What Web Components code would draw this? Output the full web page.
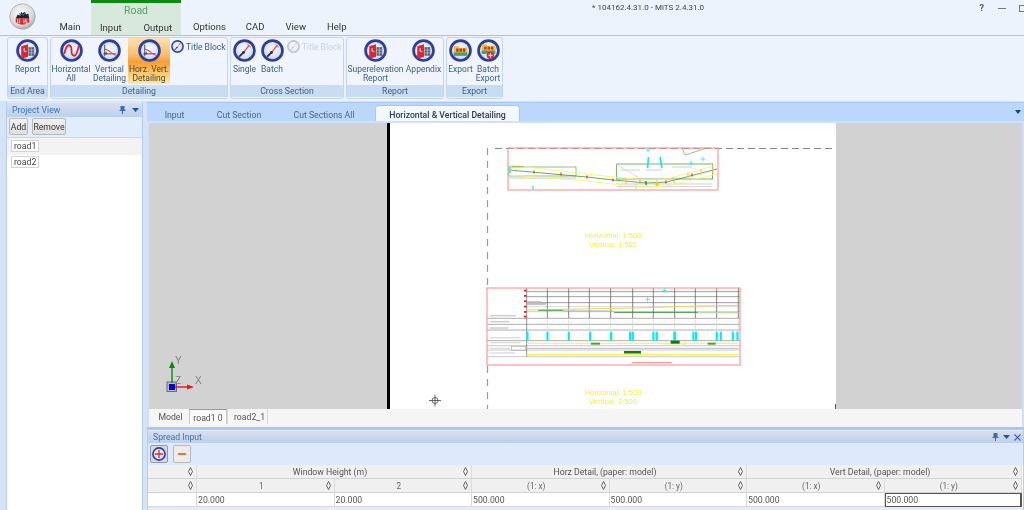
<!DOCTYPE html>
<html lang="en">
<head>
<meta charset="utf-8">
<title>MiTS</title>
<style>
html,body{margin:0;padding:0;background:#edf3fc;overflow:hidden}
body{width:1024px;height:510px;font:8.500px Roboto,"Liberation Sans",sans-serif;color:#4a5563}
</style>
</head>
<body>
<x-app>
  <x-titlebar>
    <x-orb slot="orb"></x-orb>
  </x-titlebar>
  <x-ribbon>
    <x-group w="41" label="End Area">
      <x-rbtn w="39" kind="report">Report</x-rbtn>
    </x-group>
    <x-group w="178" label="Detailing">
      <x-rbtn w="40" kind="curve">Horizontal<br>All</x-rbtn>
      <x-rbtn w="37" kind="detail">Vertical<br>Detailing</x-rbtn>
      <x-rbtn w="42" kind="detail" active>Horz. Vert.<br>Detailing</x-rbtn>
      <x-sbtn>Title Block</x-sbtn>
    </x-group>
    <x-group w="114" label="Cross Section">
      <x-rbtn w="27" kind="section">Single</x-rbtn>
      <x-rbtn w="28" kind="section">Batch</x-rbtn>
      <x-sbtn disabled>Title Block</x-sbtn>
    </x-group>
    <x-group w="98" label="Report">
      <x-rbtn w="57" kind="report">Superelevation<br>Report</x-rbtn>
      <x-rbtn w="39" kind="report">Appendix</x-rbtn>
    </x-group>
    <x-group w="57" label="Export">
      <x-rbtn w="27" kind="export">Export</x-rbtn>
      <x-rbtn w="28" kind="batch">Batch<br>Export</x-rbtn>
    </x-group>
  </x-ribbon>
  <x-workspace>
    <x-panel slot="left" heading="Project View" hh="14">
      <x-project-view></x-project-view>
    </x-panel>
    <x-doc slot="doc"></x-doc>
    <x-panel slot="bottom" heading="Spread Input" hh="12" closable>
      <x-spread></x-spread>
    </x-panel>
  </x-workspace>
</x-app>

<script>
const def=(n,c)=>customElements.define(n,c);
class Base extends HTMLElement{
  constructor(){super();this.attachShadow({mode:'open'});}
  html(s){this.shadowRoot.innerHTML=s;}
}
/* ---------- root ---------- */
def('x-app',class extends Base{connectedCallback(){this.html(`<style>
:host{display:flex;flex-direction:column;width:1024px;height:510px;overflow:hidden;background:#edf3fc;filter:blur(.3px)}
</style><slot></slot>`);}});

/* ---------- title bar ---------- */
def('x-orb',class extends Base{connectedCallback(){this.html(`<style>:host{display:block;width:27px;height:27px}svg{display:block}</style>
<svg width="27" height="27" viewBox="0 0 28 28"><defs>
<radialGradient id="o" cx=".42" cy=".35" r=".75"><stop offset="0" stop-color="#fafafa"/><stop offset=".65" stop-color="#d8d8d8"/><stop offset="1" stop-color="#8f959c"/></radialGradient></defs>
<circle cx="14" cy="14" r="13.200" fill="url(#o)" stroke="#a2a8ae" stroke-width=".8"/>
<path d="M7 16l2-4 2 1 2-4 1 2 2-2 2 3 2-1 1 5z" fill="#17252f"/>
<path d="M11 10.500l1 2.500 2-2 1 2 1.500-3" stroke="#1d7fa0" fill="none"/>
<path d="M7 16h14v4q-3 2.500-7 2.500t-7-2.500z" fill="#e2232b"/>
<path d="M9 17v4M11 17v4M15.500 17v4M18.500 17.500h-1.500v1.500h1.500v2h-1.500" stroke="#fff" stroke-width=".9" fill="none"/>
</svg>`);}});
def('x-titlebar',class extends Base{connectedCallback(){this.html(`<style>
:host{display:flex;height:35px;flex:none;border-bottom:1px solid #b8c0cb;background:#edf3fc;color:#333;font-size:9.500px}
.orb{width:49px;padding:3px 0 0 9px;box-sizing:border-box}
.tab{display:flex;align-items:flex-end;justify-content:center;padding-bottom:2px;box-sizing:border-box;line-height:12px}
.main{width:42px}
.road{width:90px;background:#d9e8dd;border-top:3px solid #0d8a12;display:flex;flex-direction:column;box-sizing:border-box}
.road b{font-weight:400;color:#4da760;font-size:10.500px;text-align:center;line-height:14px;height:15px;padding-top:1px}
.road div{display:flex;justify-content:space-between;padding:3px 9px 0 9px;line-height:12px}
.rest{flex:1;display:flex;flex-direction:column}
.top{height:16px;display:flex;padding-left:411px;font-size:8px;line-height:15px;color:#444}
.w{margin-left:auto;display:flex;gap:14px;align-items:center}
.w span{font-weight:700;font-size:9px;color:#555}
.m{width:8px;height:1px;background:#777}
.r{width:6px;height:5px;border:1px solid #777;border-right:0;margin-left:-1px;margin-right:-2px}
.tabs{display:flex;height:19px;align-items:flex-end;padding-bottom:2px;box-sizing:border-box;line-height:12px}
</style>
<div class="orb"><slot name="orb"></slot></div>
<div class="tab main">Main</div>
<div class="road"><b>Road</b><div><span>Input</span><span>Output</span></div></div>
<div class="rest">
  <div class="top"><span>* 104162.4.31.0 - MiTS 2.4.31.0</span>
    <div class="w"><span>?</span><i class="m"></i><i class="r"></i></div></div>
  <div class="tabs"><span style="margin-left:12px">Options</span><span style="margin-left:20px">CAD</span><span style="margin-left:21px">View</span><span style="margin-left:21px">Help</span></div>
</div>`);}});

/* ---------- icons ---------- */
const glyph={
 report:`<path d="M5.500 7.500l7-2v13l-7 2z" fill="#e2232b"/><path d="M8.500 9.500v3.500h2.300" stroke="#fff" stroke-width=".9" fill="none"/><path d="M13 8.500h6v9h-6z" fill="#5b6270"/><path d="M13 11.500h6M13 14.500h6M16 8.500v9" stroke="#cfd6e2" stroke-width=".6"/>`,
 curve:`<path d="M4.500 15.500q2-9 4.800-9t2.700 5.500 2.700 5.500 4.800-10" fill="none" stroke="#d9252f" stroke-width="1.900"/>`,
 detail:`<path d="M7 6v12M5.500 15.500h13" stroke="#3a3f4a" stroke-width=".9"/><path d="M7 10.500l4 1.500 3 2.500 4.500 2.500" fill="none" stroke="#e0454c" stroke-width="1.100"/><path d="M8.500 13l1.200 3h-2.700z" fill="#3a3f4a"/>`,
 section:`<path d="M6.500 18.500l4.500-4.500" stroke="#262b36" stroke-width="1.800"/><path d="M11 14l6-7.500" stroke="#e45a50" stroke-width="1.500"/><circle cx="11" cy="14" r="1.400" fill="#262b36"/><path d="M15 5.500l3.500 3" stroke="#e45a50"/>`,
 export:`<path d="M5 7.500h5l1 1.500h8v8.500h-14z" fill="#e7c23a"/><path d="M5 14h14v3.500h-14z" fill="#4f9e67"/><path d="M7.500 10h2.500v3.200h-2.500zM11 10h2.500v3.200h-2.500zM14.500 10h2.500v3.200h-2.500z" fill="#d62b2b"/>`,
 batch:`<path d="M5 5.500h5l1 1.500h8v8.500h-14z" fill="#e7c23a"/><path d="M5 12h14v3.500h-14z" fill="#4f9e67"/><path d="M7.500 8h2.500v3h-2.500zM11 8h2.500v3h-2.500zM14.500 8h2.500v3h-2.500z" fill="#d62b2b"/><circle cx="14" cy="17" r="3.800" fill="#e0262e"/><path d="M11.800 17h4.400M14 14.800v4.400" stroke="#fff" stroke-width="1.200"/>`,
 plus:`<path d="M5 12h14M12 5v14" stroke="#e0262e" stroke-width="2.200"/>`
};
def('x-icon',class extends Base{connectedCallback(){
 const k=this.getAttribute('kind'),s=this.getAttribute('size')||24;
 this.html(`<style>:host{display:block;width:${s}px;height:${s}px}svg{display:block}</style>
<svg width="${s}" height="${s}" viewBox="0 0 24 24"><defs>
<radialGradient id="g" cx=".5" cy=".4" r=".65"><stop offset="0" stop-color="#f6f8fd"/><stop offset=".7" stop-color="#d6dff2"/><stop offset="1" stop-color="#a5b3d8"/></radialGradient></defs>
<circle cx="12" cy="12" r="10.400" fill="url(#g)" stroke="#2f3f98" stroke-width="2.800"/>${glyph[k]||''}</svg>`);}});

/* ---------- ribbon ---------- */
def('x-ribbon',class extends Base{connectedCallback(){this.html(`<style>
:host{display:flex;gap:2px;height:65px;flex:none;padding:1px 0 0 7px;box-sizing:border-box;background:#edf3fc}
</style><slot></slot>`);}});
def('x-group',class extends Base{connectedCallback(){this.html(`<style>
:host{display:flex;flex-direction:column;width:${this.getAttribute('w')}px;height:62px;box-sizing:border-box;border:1px solid #c3d6ee;border-radius:3px;background:#f0f5fd;flex:none}
.c{display:flex;height:47px}
.l{height:12px;background:#c8ddf3;text-align:center;font-size:8.700px;line-height:12px;color:#3f5f82}
</style><div class="c"><slot></slot></div><div class="l">${this.getAttribute('label')}</div>`);}});
def('x-rbtn',class extends Base{connectedCallback(){
 const a=this.hasAttribute('active');
 this.html(`<style>
:host{display:flex;flex-direction:column;align-items:center;flex:none;width:${this.getAttribute('w')}px;box-sizing:border-box;height:46px;padding-top:1px;
 font-size:8.500px;line-height:9.200px;text-align:center;color:#41607f;white-space:nowrap;
 ${a?'background:linear-gradient(#fde0ae 0,#fbbf70 36%,#f79e34 52%,#fcc767 75%,#ffe9a8 100%);color:#4d4330;border-radius:1px;':''}}
div{margin-top:2.500px}
</style><x-icon kind="${this.getAttribute('kind')}" size="23"></x-icon><div><slot></slot></div>`);}});
def('x-sbtn',class extends Base{connectedCallback(){
 const d=this.hasAttribute('disabled');
 this.html(`<style>
:host{display:flex;align-items:center;gap:2px;height:13px;margin:2px 0 0 1px;font-size:8.500px;white-space:nowrap;color:${d?'#c9d2de':'#41607f'}}
x-icon{${d?'opacity:.28;filter:grayscale(1)':''}}
</style><x-icon kind="section" size="13"></x-icon><span><slot></slot></span>`);}});

/* ---------- workspace ---------- */
def('x-workspace',class extends Base{connectedCallback(){this.html(`<style>
:host{flex:1;min-height:0;display:grid;grid-template-columns:137px 1fr;grid-template-rows:325px 1fr;column-gap:4px;padding:1px 0 0 6px;box-sizing:border-box;background:#d4e3f8}
.l{grid-row:1/3;min-height:0}
.d{min-height:0}.b{min-height:0;padding-top:3px;box-sizing:border-box;background:#a9c9f1}
</style><div class="l"><slot name="left"></slot></div><div class="d"><slot name="doc"></slot></div><div class="b"><slot name="bottom"></slot></div>`);}});
def('x-panel',class extends Base{connectedCallback(){
 const pin=`<svg width="7" height="8" viewBox="0 0 7 8"><path d="M1.500 0h4v4h1v1h-2.500v3h-1v-3h-2.500v-1h1z" fill="#3c6bb4"/></svg>`;
 const tri=`<svg width="7" height="4" viewBox="0 0 7 4"><path d="M0 0h7l-3.500 4z" fill="#25549a"/></svg>`;
 const x=`<svg width="7" height="7" viewBox="0 0 7 7"><path d="M.5.500l6 6M6.500.500l-6 6" stroke="#3c6bb4" stroke-width="1.200"/></svg>`;
 const c=this.hasAttribute('closable');
 this.html(`<style>
:host{display:flex;flex-direction:column;height:100%;box-sizing:border-box;background:#e2edfc;border:1px solid #b2cdef;border-width:0 1px;overflow:hidden}
.h{height:${this.getAttribute('hh')}px;flex:none;display:flex;align-items:center;padding:0 ${c?2:3}px 0 5px;gap:${c?4:6}px;background:linear-gradient(#d8deef,#bcd1e9);color:#3c74b2;font-size:8.700px;margin-top:1px}
.h span{margin-right:auto}
.h svg{display:block}
.c{flex:1;min-height:0;display:flex;flex-direction:column}
</style><div class="h"><span>${this.getAttribute('heading')}</span>${pin}${tri}${c?x:''}</div><div class="c"><slot></slot></div>`);}});
def('x-project-view',class extends Base{connectedCallback(){this.html(`<style>
:host{display:flex;flex-direction:column;flex:1;min-height:0;color:#444;font-size:8.700px}
.bar{display:flex;gap:4px;padding:1px 0 2px 2px;height:17px;flex:none;border-bottom:1px solid #c9d7e8}
button{font:inherit;color:#333;height:17px;padding:0;border:1px solid #b9b9b9;border-radius:2px;background:linear-gradient(#f1f1f1,#dfdfdf);margin:0}
.list{flex:1;background:#fff}
.row{height:17px;padding:2px 0 0 4px;box-sizing:border-box;background:#f3f3f3}
.row+.row{background:#fff;height:15px;padding-top:1px}
.row span{display:inline-block;height:12px;line-height:11px;padding:0 2px;border:1px solid #d2d2d2;box-sizing:border-box;background:#fff;vertical-align:top}
</style><div class="bar"><button style="width:19px">Add</button><button style="width:34px">Remove</button></div>
<div class="list"><div class="row"><span>road1</span></div><div class="row"><span>road2</span></div></div>`);}});

/* ---------- document area ---------- */
def('x-doc',class extends Base{connectedCallback(){
 const tab=(t,w,a)=>`<div class="tab${a?' on':''}" style="width:${w}px">${t}</div>`;
 this.html(`<style>
:host{display:flex;flex-direction:column;height:100%;box-sizing:border-box;background:#fff;color:#44556b;font-size:8.700px}
.strip{height:19px;flex:none;display:flex;align-items:flex-end;background:#bbd7fb;border-top:1px solid #a9c9f1;padding-left:5px;box-sizing:border-box}
.tab{height:16px;line-height:16px;padding-top:2px;box-sizing:border-box;text-align:center;flex:none;color:#4a6587}
.on{background:#f3f7fe;border-radius:4px 4px 0 0;color:#2d3a52;font-weight:500;border:1px solid #a7c7ef;border-bottom:0;margin-left:8px;line-height:14px}
.menu{margin-left:auto;align-self:center;margin-right:3px;display:block}
.frame{flex:1;min-height:0;display:flex;flex-direction:column;border:solid #cfe0f7;border-width:2px 2px 0 2px;background:#f5f5f5}
.canvas{flex:none;height:286px;display:flex}
.g{background:#d2d2d2;position:relative}
.bar{width:3px;background:#000}
.s{width:446px;background:#fff}
.tabs{height:15px;flex:none;display:flex;background:#f5f5f5;padding-left:3px;color:#555}
.mt{height:15px;line-height:16px;padding:0 2px;border:1px solid transparent;border-width:0 1px;box-sizing:border-box;text-align:center}
svg{display:block}
</style>
<div class="strip">${tab('Input',45)}${tab('Cut Section',84)}${tab('Cut Sections All',86)}${tab('Horizontal &amp; Vertical Detailing',145,1)}
 <svg class="menu" width="6" height="4" viewBox="0 0 6 4"><path d="M0 0h6l-3 4z" fill="#1d3f8a"/></svg></div>
<div class="frame">
 <div class="canvas">
  <div class="g" style="width:238px"><x-ucs style="position:absolute;left:12px;top:232px"></x-ucs></div>
  <div class="bar"></div>
  <div class="s"><x-drawing></x-drawing></div>
  <div class="g" style="flex:1"></div>
 </div>
 <div class="tabs">
  <div class="mt" style="width:37px">Model</div>
  <div class="mt" style="width:38px;border-color:#c9c9c9;border-top:1px solid #999;background:#fafafa">road1 0</div>
  <div class="mt" style="width:41px;border-color:#d9d9d9;padding-left:6px">road2_1</div>
 </div>
</div>`);}});
def('x-ucs',class extends Base{connectedCallback(){this.html(`<style>:host{display:block}svg{display:block}text{font:10px "Liberation Sans",sans-serif;fill:#808080}</style>
<svg width="50" height="45" viewBox="0 0 50 45">
<rect x="6" y="27" width="9.500" height="9.500" fill="#bbb" stroke="#555" stroke-width=".8"/>
<rect x="8" y="29" width="6" height="6" fill="#0000e6"/>
<path d="M11 28V11" stroke="#0a8a0a" stroke-width="1.400"/><path d="M8 13l3-7 3 7z" fill="#0a8a0a"/>
<path d="M14 32h14" stroke="#f01414" stroke-width="1.400"/><path d="M26 29.500l7 2.500-7 2.500z" fill="#f01414"/>
<text x="14" y="9">Y</text><text x="34" y="29">X</text><text x="14" y="29">Z</text>
</svg>`);}});
def('x-drawing',class extends Base{connectedCallback(){
 const L=(x1,y1,x2,y2,c,w=.7)=>`<line x1="${x1}" y1="${y1}" x2="${x2}" y2="${y2}" stroke="${c}" stroke-width="${w}"/>`;
 const P=(pts,c,w=.8)=>`<polyline points="${pts}" fill="none" stroke="${c}" stroke-width="${w}"/>`;
 const R=(x,y,w,h,c,sw=.9)=>`<rect x="${x}" y="${y}" width="${w}" height="${h}" fill="none" stroke="${c}" stroke-width="${sw}"/>`;
 const F=(x,y,w,h,c)=>`<rect x="${x}" y="${y}" width="${w}" height="${h}" fill="${c}"/>`;
 const cross=(x,y,r=2.500)=>L(x-r,y,x+r,y,'#35e6ee',.8)+L(x,y-r,x,y+r,'#35e6ee',.8);
 const zx=v=>480+v/3, zy=v=>280+v/3;
 let s='';
 s+=`<path d="M495 148.500H836" stroke="#888" stroke-width="1.100" stroke-dasharray="7 4" fill="none"/>`;
 s+=`<path d="M487.500 148V285M487.500 366V409" stroke="#999" stroke-width="1.200" stroke-dasharray="7 6" fill="none"/>`;
 s+=`<path d="M835.500 404V409" stroke="#555" stroke-width="1"/>`;
 /* top plan */
 s+=R(508,148,210,42,'#ff8f8f',1.100);
 s+=R(509,167,67,9,'#77b36d',.8)+R(616.500,164,96,15,'#77b36d',1);
 s+=L(509,178,576,178,'#c9c9c9',1)+L(616,184,712,184,'#bbb',.7)+L(616,186.500,712,186.500,'#c5c5c5',.7)+L(636,184,636,190,'#bbb',.7)+L(620,184,620,190,'#ccc',.7);
 s+=P('616,164 647,183','#c9c9c9',.7);
 s+=P('509,165 587,174 613,177 647,180 667,179 717,165','#f6f66d',.9);
 s+=P('509,175 587,181 613,184 647,187 667,186 717,174','#f6f66d',.9);
 s+=P('509,170 587,177 613,180 647,183 667,182 717,169','#5e9c45',.9);
 [[534,172],[561,174],[587,177],[613,180],[640,182],[666,182],[692,175]].forEach(([x,y])=>s+=L(x,y-1.500,x,y+1.500,'#ee2020',1.100));
 [[626,181],[640,181],[657,183],[674,180],[688,176],[701,172],[713,170]].forEach(([x,y])=>s+=L(x,y-3,x,y+3,'#f2c28a',1.400));
 s+=`<circle cx="657" cy="184" r="2" fill="#f3c93a"/>`+L(646,181,646,185,'#0f7d24',1.200);
 s+=F(509,166,2,7,'#6ee0e6')+F(512,166,12,1,'#a9c13d');
 s+=cross(648,150)+cross(691,163)+cross(703,159);
 s+=L(648.500,157,647.500,168,'#14e6f2',1.700)+L(660,157,662,168,'#14e6f2',1.700);
 s+=P('682,148 685,155 707,148','#77b36d',.8);
 s+=F(532,186,2,4,'#7be8ee')+F(559,189,2,1,'#7be8ee');
 s+=L(620,170,640,170,'#ddd',1.400)+L(646,170,662,170,'#ddd',1.400)+L(672,167,692,167,'#ddd',1.400);
 s+=`<text class="y" x="613" y="238" text-anchor="middle">Horizontal, 1:500</text><text class="y" x="613" y="247" text-anchor="middle">Vertical, 1:500</text>`;
 /* long section */
 const gx=[202,266,328,392,458,520,584,646,710,775];
 [35,50,68].forEach(v=>s+=L(zx(140),zy(v),740,zy(v),'#888',.8));
 s+=L(zx(140),zy(80),740,zy(80),'#ccc',.7)+L(zx(140),zy(95),740,zy(95),'#bbb',.7);
 [115,133,150,182,197,210,230].forEach((v,i)=>s+=L(487,zy(v),740,zy(v),i<4?'#999':'#bbb',.8));
 s+=L(zx(140),288,zx(140),zy(230),'#777',.8);
 gx.forEach(v=>{s+=L(zx(v),288,zx(v),zy(115),'#666',.8)+L(zx(v),zy(115),zx(v),zy(150),'#d5d5d5',.8);});
 [142,202,266,330,393,450,458,520,530,584,640,648,710,722,758,772].forEach(v=>s+=F(zx(v)-1,zy(155),2.200,9,'#06ecf6'));
 s+=F(zx(580),zy(155),2.800,9,'#06ecf6');
 [32,48,64,80,96,110].forEach(v=>s+=F(zx(132),zy(v)-1,2.500,1.800,'#e81b1b'));
 s+=P(`${zx(140)},${zy(90)} ${zx(415)},${zy(85)} ${zx(500)},${zy(83)} ${zx(575)},${zy(80)} 738,${zy(76)}`,'#d9d960',1);
 s+=L(zx(175),zy(91),zx(250),zy(91),'#45a03a',1)+L(zx(250),zy(93),zx(400),zy(93),'#aaa',1.200)+L(zx(402),zy(97),zx(655),zy(97),'#2a8a2a',.9)+L(zx(660),zy(98),zx(775),zy(98),'#b8d8a8',1.100);
 s+=L(zx(140),zy(72),zx(198),zy(72),'#aaa',1.400)+L(zx(142),zy(65),zx(185),zy(65),'#ccc',1.300);
 s+=L(zx(30),zy(107),zx(108),zy(107),'#ccc',1.500)+L(zx(30),zy(125),zx(88),zy(125),'#ccc',1.500)+L(zx(30),zy(144),zx(85),zy(144),'#ccc',1.500);
 s+=L(zx(30),zy(173),zx(122),zy(173),'#ddd',1.400)+L(zx(30),zy(188),zx(122),zy(188),'#ddd',1.400)+L(zx(30),zy(205),zx(92),zy(205),'#ddd',1.400)+L(zx(30),zy(219),zx(105),zy(219),'#ddd',1.400);
 s+=R(zx(95),zy(200),14,4,'#aaa',.6);
 s+=L(zx(140),zy(190),zx(775),zy(190),'#f4f46d',1.100)+L(zx(140),zy(224),zx(775),zy(224),'#eeee55',1.300);
 s+=L(zx(140),zy(205),zx(775),zy(205),'#c9c9c9',1.100);
 s+=F(zx(333),zy(188),9,2,'#45a03a')+F(zx(683),zy(188),8,2,'#45a03a')+F(zx(572),zy(182),9,3,'#0b7a12')+F(zx(432),zy(213),17,2.500,'#0f7d24');
 s+=P(`${zx(557)},${zy(183)} ${zx(557)},${zy(195)} ${zx(615)},${zy(195)} ${zx(615)},${zy(183)}`,'#f0ec6b',.7);
 s+=cross(zx(553),zy(31))+cross(zx(503),zy(58));
 s+=L(zx(455),zy(248),zx(575),zy(248),'#f29a9a',1.400);
 s+=R(487,288,253,77,'#ff8f8f',1.100);
 s+=`<text class="y" x="613" y="395" text-anchor="middle">Horizontal, 1:500</text><text class="y" x="613" y="404" text-anchor="middle">Vertical, 1:500</text>`;
 s+=`<circle cx="435" cy="400.500" r="3" fill="none" stroke="#444" stroke-width=".8"/>`+L(429,400.500,441,400.500,'#444',.8)+L(435,394.500,435,406.500,'#444',.8);
 this.html(`<style>:host{display:block;width:446px;height:286px}svg{display:block}.y{font:7.500px "Liberation Sans",sans-serif;fill:#f2f230}</style>
<svg width="446" height="286" viewBox="390 123 446 286">${s}</svg>`);}});

/* ---------- spread ---------- */
def('x-spread',class extends Base{connectedCallback(){
 const d=`<svg class="d" width="5" height="9" viewBox="0 0 5 9"><path d="M2.500.500L4.500 4.500 2.500 8.500.500 4.500z" fill="none" stroke="#555" stroke-width=".9"/></svg>`;
 const H=(t,span)=>`<div class="th" style="grid-column:span ${span}"><span>${t}</span>${d}</div>`;
 const S=(t)=>`<div class="th sub"><span>${t}</span>${d}</div>`;
 const C=(t,c='')=>`<div class="td ${c}">${t}</div>`;
 this.html(`<style>
:host{display:flex;flex-direction:column;flex:1;color:#555;font-size:8.700px}
.bar{height:22px;flex:none;display:flex;gap:5px;align-items:center;padding:0 0 0 2px;background:#deeafb}
.b{width:16px;height:16px;border:1px solid #b8b8b8;border-radius:2px;background:#ececec;display:flex;align-items:center;justify-content:center}
.b.on{background:#d4dbe6;border-color:#8f9aab}
.m{width:8px;height:2.500px;background:#e8763c}
.t{display:grid;grid-template-columns:49px repeat(6,137.500px);grid-auto-rows:14px;background:#fff}
.th{background:#f0f0f1;border-right:1px solid #dcdcdc;border-bottom:1px solid #d2d2d2;display:flex;align-items:center;box-sizing:border-box;padding-right:3px}
.th span{flex:1;text-align:center}
.th svg{display:block;flex:none}
.sub{color:#666;font-size:8.200px}
.td{background:#fff;border-right:1px solid #d8d8d8;border-bottom:1px solid #d8d8d8;box-sizing:border-box;line-height:15px;padding-left:1px}
.sel{border:1px solid #555;border-width:1px 2px 1px 1px;line-height:13px}
</style>
<div class="bar"><div class="b on"><x-icon kind="plus" size="14"></x-icon></div><div class="b"><i class="m"></i></div></div>
<div class="t">
 ${H('',1)}${H('Window Height (m)',2)}${H('Horz Detail, (paper: model)',2)}${H('Vert Detail, (paper: model)',2)}
 ${H('',1)}${S('1')}${S('2')}${S('(1: x)')}${S('(1: y)')}${S('(1: x)')}${S('(1: y)')}
 ${C('')}${C('20.000')}${C('20.000')}${C('500.000')}${C('500.000')}${C('500.000')}${C('500.000','sel')}
</div>`);}});
</script>
</body>
</html>
